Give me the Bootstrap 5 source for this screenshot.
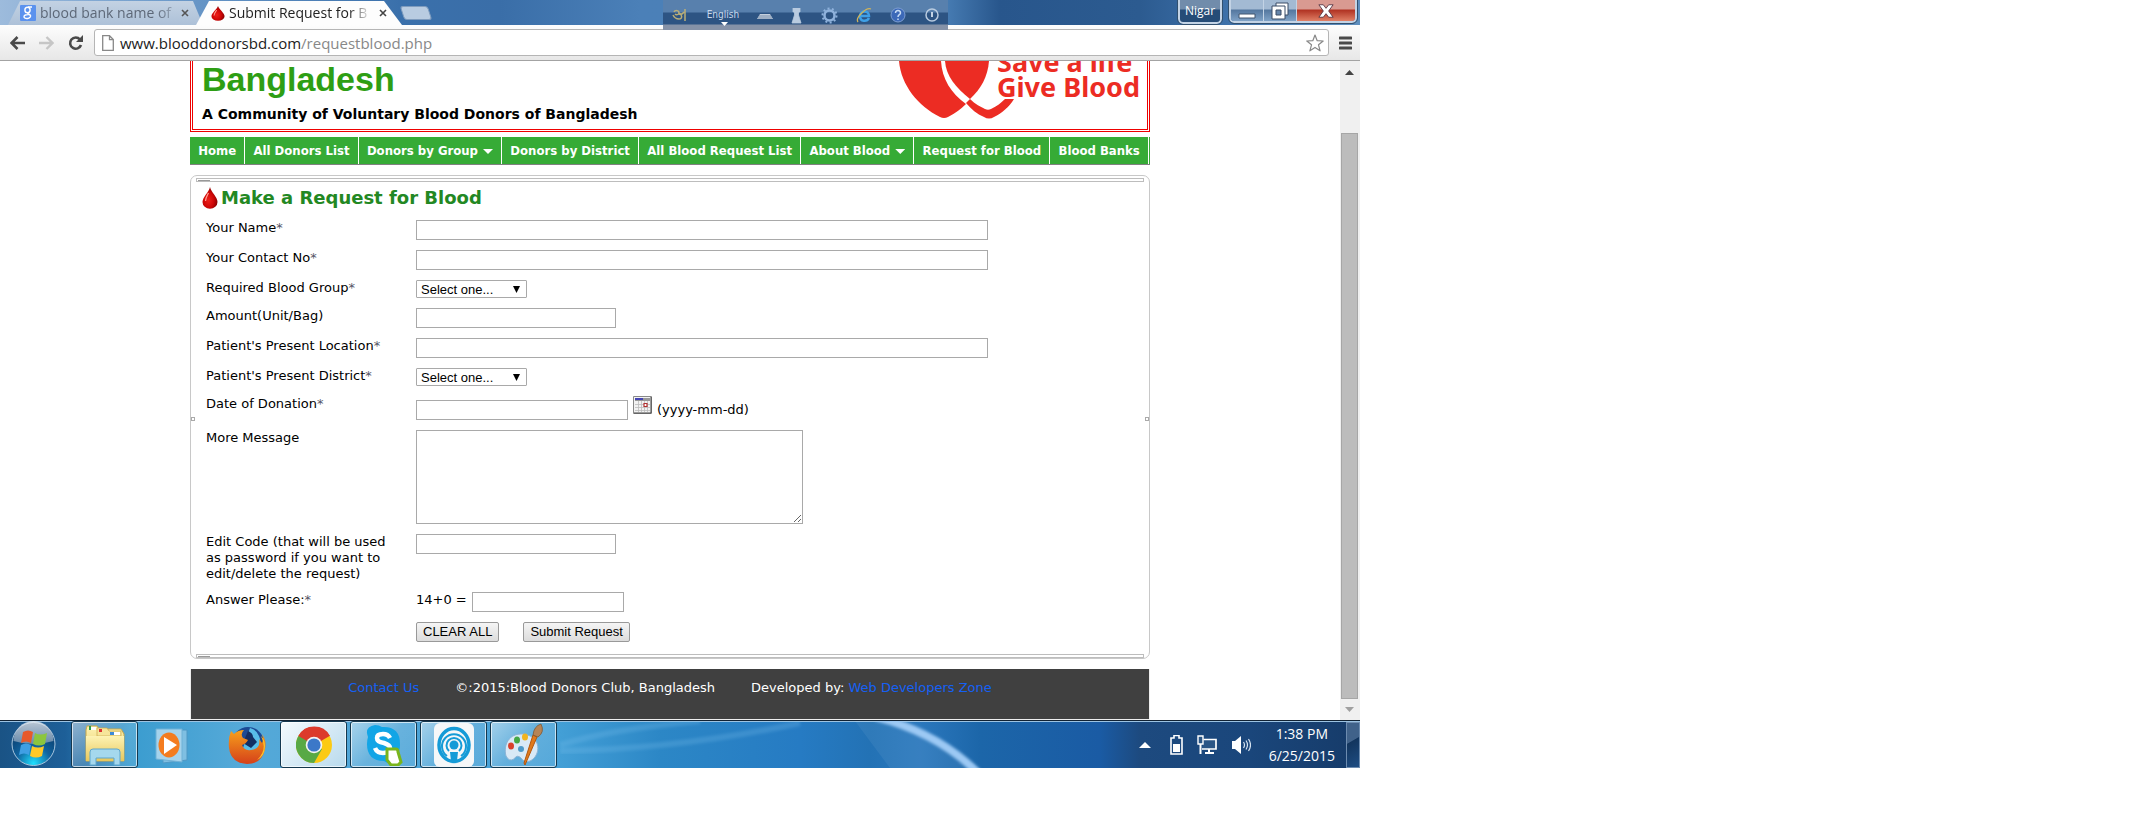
<!DOCTYPE html>
<html lang="en">
<head>
<meta charset="utf-8">
<meta name="viewport" content="width=device-width, initial-scale=1">
<title>Submit Request for Blood</title>
<link rel="stylesheet" href="https://cdn.jsdelivr.net/npm/bootstrap@5.3.0/dist/css/bootstrap.min.css">
<style>
  :root { --verdana: Verdana, "DejaVu Sans", sans-serif; --segoe: "Segoe UI", "Open Sans", "Noto Sans", sans-serif; --tahoma: "DejaVu Sans Condensed", "DejaVu Sans", sans-serif; --arial: "Liberation Sans", Arial, sans-serif; }
  body { background: #fff; color: #000; font-family: var(--verdana); font-size: 13px; line-height: 16px; overflow-x: hidden; }
  svg { display: block; flex: none; }
  .desktop { width: 63.85%; }

  /* Browser frame */
  .titlebar { height: 25px; padding-left: 8px; background: linear-gradient(90deg, #9dbbdc 0, #6f9ccb 160px, #3a70ab 400px, #3a6ea8 500px, #4b80b8 640px, #4a80b7 940px, #28568c 1000px, #2c5b90 1140px, #3c6fa8 1220px, #5f8fbe 100%); }
  .tab { height: 24px; font: 14px/22px var(--segoe); margin-top: 1px; }
  .tab-label { overflow: hidden; white-space: nowrap; }
  .tab-idle { width: 195px; padding: 0 14px 0 12px; color: #5d6878; background: linear-gradient(#c3d2e3, #adc1d8); clip-path: polygon(12px 0, 185px 0, 100% 100%, 0 100%); }
  .tab-live { width: 206px; padding: 0 15px 0 15px; color: #222; background: #fdfdfd; clip-path: polygon(13px 0, 188px 0, 100% 100%, 0 100%); margin-left: -7px; }
  .tab-idle .tab-label { width: 137px; -webkit-mask-image: linear-gradient(90deg, #000 115px, transparent 145px); }
  .tab-live .tab-label { width: 139px; -webkit-mask-image: linear-gradient(90deg, #000 120px, transparent 142px); }
  .plain-btn { border: 0; background: none; padding: 0; color: inherit; line-height: 1; }
  .new-tab { width: 28px; height: 14px; margin-top: 6px; border: 1px solid #7f9cbe; border-radius: 3px; background: #b9cce1; transform: skewX(18deg); padding: 0; }
  .ime-bar { left: 663px; top: 0; width: 285px; height: 30px; background: linear-gradient(#5880ad 0 12px, #2d5483 13px 24px, #8592a8 25px); color: #c7d8ec; z-index: 2; }
  .ime-lang { font: 10px/14px var(--tahoma); }
  .user-badge { width: 44px; height: 24px; border: 2px solid #c3d3e5; border-top: 0; border-radius: 0 0 5px 5px; outline: 1px solid #31506f; background: linear-gradient(#718cab 0 9px, #264c77 10px); color: #fff; font: 12px/20px var(--segoe); padding: 0; }
  .win-group { margin: 0 3px 0 7px; height: 23px; border: 2px solid #c3d3e5; border-top: 0; border-radius: 0 0 5px 5px; outline: 1px solid #31506f; overflow: hidden; }
  .win-btn { width: 33px; border: 0; border-right: 1px solid #c3d3e5; padding: 0; background: linear-gradient(#a3bad3 0 9px, #54779f 10px, #7fa2c6); display: flex; justify-content: center; align-items: center; }
  .win-close { width: 58px; border-right: 0; background: linear-gradient(#d99a91 0 9px, #b03222 10px, #e08066); }
  .toolbar { height: 36px; background: linear-gradient(#fdfdfd, #e7e7e7); border-bottom: 1px solid #a3a3a3; padding: 3px 8px 3px 10px; }
  .toolbar > .plain-btn + .plain-btn { margin-left: 14px; }
  .omnibox { height: 27px; border: 1px solid #b5b5b5; border-radius: 3px; background: #fff; margin: 0 10px 0 11px; padding: 0 4px 0 7px; gap: 6px; }
  .address { font: 15px/24px var(--segoe); color: #888; }
  .address b { font-weight: 400; color: #222; }

  /* Site */
  .viewport { background: #fff; }
  .site { width: 960px; }
  .banner { height: 71px; border: 3px double #e00; border-top: 0; overflow: hidden; padding-left: 9px; }
  .site-name { font: bold 34px/37px var(--arial); color: #2e9e14; margin: 0; }
  .tagline { font-size: 14px; line-height: 18px; font-weight: 700; margin-top: 7px; }
  .logo-block { width: 250px; height: 68px; }
  .slogan { left: 100px; bottom: 30px; font: bold 27px/25px "Noto Sans", sans-serif; color: #ec2c23; white-space: nowrap; }
  .menu { margin-top: 5px; height: 28px; background: #36ab36; border-bottom: 1px solid #808080; padding-right: 1px; }
  .menu a { display: flex; align-items: center; flex: 1 1 auto; justify-content: center; gap: 5px; color: #fff; font: bold 13px/27px var(--tahoma); text-decoration: none; border-right: 1px solid #fff; white-space: nowrap; }
  .caret { width: 10px; height: 5px; background: #fff; clip-path: polygon(0 0, 100% 0, 50% 100%); margin-top: 2px; }
  .panel { margin-top: 10px; border: 1px solid #c8c8c8; border-radius: 7px; padding: 2px 5px 0; }
  .rule-strip { height: 4px; border: 1px solid #bdbdbd; }
  .rule-strip::before { content: ""; display: block; width: 12px; height: 1px; margin-left: 1px; margin-top: 1px; background: #999; }
  .nub { width: 4px; height: 4px; border: 1px solid #aaa; background: #fff; top: 241px; }
  .title-row { padding: 5px 0 0 6px; gap: 3px; }
  .form-title { font-size: 18px; line-height: 22px; font-weight: 700; color: #238823; margin: 0; }
  .request-form { padding: 11px 10px 12px; display: grid; gap: 10px; }
  .form-line { display: flex; }
  .form-line > label, .form-line > .lead-cell { flex: 0 0 210px; padding-right: 20px; }
  .form-line > .sum { width: 56px; }
  .star { color: #556; }
  .field { height: 20px; padding: 0 2px; border: 1px solid #a9a9a9; border-radius: 0; font: 13px/16px var(--arial); background: #fff; }
  .w-long { width: 572px; } .w-mid { width: 200px; } .w-date { width: 212px; } .w-answer { width: 152px; }
  .date-cell { display: flex; align-items: flex-end; gap: 5px; }
  .date-hint { padding-bottom: 2px; }
  .picker { height: 18px; width: 111px; padding: 0 4px; border: 1px solid #a9a9a9; border-radius: 1px; font: 13px/15px var(--arial); color: #000; appearance: none; background: #fff url("data:image/svg+xml,%3Csvg xmlns='http://www.w3.org/2000/svg' viewBox='0 0 7 7'%3E%3Cpath d='M0 0h7L3.500 7z'/%3E%3C/svg%3E") no-repeat right 6px center / 7px 7px; }
  .message { width: 387px; height: 94px; }
  .push { height: 20px; padding: 0 6px; border: 1px solid #999; border-radius: 2px; background: linear-gradient(#f5f5f5, #dcdcdc); font: 13px/16px var(--arial); color: #000; }
  .site-foot { margin-top: 10px; height: 51px; background: #404040; color: #fff; padding-top: 11px; border: 1px solid #eee; border-top: 0; gap: 36px; }
  .site-foot a { color: #1560f5; text-decoration: none; }
  .scroller { width: 20px; background: #f0f0f0; padding: 9px 2px 8px 1px; }
  .thumb { background: #bcbcbc; border: 1px solid #a6a6a6; width: 100%; margin: 57px 0 7px; }

  /* Taskbar */
  .taskbar { height: 48px; border-top: 1px solid #123; box-shadow: inset 0 1px #9cc3e2; background: linear-gradient(90deg, #1a5385 0, #1d5f98 65px, #3a9ccf 130px, #55a9d8 240px, #439fd6 560px, #2c87c6 660px, #267bc3 800px, #2372b5 870px, #2b78bd 920px, #1c66a9 980px, #1a5ba4 1100px, #1d4a7f 1140px, #1a467b 1250px, #163b69 100%); overflow: hidden; }
  .streaks { left: 560px; }
  .start-btn { margin: 0 15px 0 11px; }
  .task { width: 67px; height: 47px; border: 1px solid #14384f; border-radius: 3px; box-shadow: inset 0 0 0 1px #ffffffa8; background: linear-gradient(135deg, #ffffff80, #ffffff28 50%, #ffffff18); display: flex; align-items: center; justify-content: center; padding: 0; }
  .task-live { background: linear-gradient(135deg, #f4fafd, #b8daed); }
  .task-bare { border: 0; box-shadow: none; background: none; }
  .task-bare + .task-bare { margin-left: 8px; }
  .task-live ~ .task { margin-left: 3px; }
  .tray { gap: 14px; margin-left: 19px; }
  .clock { font: 14px/22px var(--segoe); color: #fff; text-align: center; margin: 0 11px 0 18px; }
  .show-desk { width: 14px; height: 46px; border: 1px solid #6d8cb0; background: linear-gradient(150deg, #40628a 0 40%, #12355e 42%, #1f4d83); padding: 0; }
</style>
</head>
<body>
<svg width="0" height="0" class="position-absolute" aria-hidden="true">
  <defs>
    <radialGradient id="red" cx=".4" cy=".6" r=".6"><stop offset="0" stop-color="#f0201a"/><stop offset=".6" stop-color="#cc0606"/><stop offset="1" stop-color="#800"/></radialGradient>
    <linearGradient id="folder" x2="0" y2="1"><stop stop-color="#fdf3b4"/><stop offset="1" stop-color="#e8c75c"/></linearGradient>
    <radialGradient id="orb" cx=".5" cy=".95" r=".9"><stop offset="0" stop-color="#1fe0ff"/><stop offset=".45" stop-color="#10639f"/><stop offset="1" stop-color="#0a3460"/></radialGradient>
    <linearGradient id="gloss" x2="0" y2="1"><stop stop-color="#e8eef4"/><stop offset="1" stop-color="#7c97b3"/></linearGradient>
    <linearGradient id="fox" x2="0" y2="1"><stop stop-color="#f7a11b"/><stop offset="1" stop-color="#d5401a"/></linearGradient>
    <symbol id="drop" viewBox="0 0 16 22"><path d="M8 0C7 5 .5 10 .5 15a7.500 6.800 0 0 0 15 0C15.500 10 9 5 8 0z" fill="url(#red)"/><path d="M6.500 6C5 9 3.500 11 3.500 14" stroke="#ff9d90" stroke-width="1.300" fill="none"/></symbol>
  </defs>
</svg>

<div class="desktop d-flex flex-column">
  <header class="titlebar position-relative d-flex align-items-start">
    <div class="tab tab-idle d-flex align-items-center">
      <svg width="16" height="16" viewBox="0 0 16 16"><rect width="16" height="16" rx="1" fill="#5b92ee"/><g fill="none" stroke="#fff" stroke-width="1.400"><ellipse cx="7.500" cy="5" rx="2.600" ry="2.800"/><path d="M8 2h4M8.500 7.500c-2 1 1 1.500 2 3 .8 3.500-6.500 4-6.500 1.200C4 10 6 9.500 8.500 9.700"/></g></svg>
      <span class="tab-label ms-1">blood bank name of</span>
      <button class="plain-btn ms-auto" aria-label="Close tab"><svg width="8" height="8" viewBox="0 0 8 8"><path d="M1 1l6 6M7 1L1 7" stroke="#555" stroke-width="1.600"/></svg></button>
    </div>
    <div class="tab tab-live d-flex align-items-center">
      <svg width="14" height="15" viewBox="0 0 16 22" preserveAspectRatio="none"><use href="#drop" width="16" height="22"/></svg>
      <span class="tab-label ms-1">Submit Request for Blood</span>
      <button class="plain-btn ms-auto" aria-label="Close tab"><svg width="8" height="8" viewBox="0 0 8 8"><path d="M1 1l6 6M7 1L1 7" stroke="#444" stroke-width="1.600"/></svg></button>
    </div>
    <button class="new-tab" aria-label="New tab"></button>
    <div class="ime-bar position-absolute d-flex align-items-center justify-content-between ps-2 pe-2">
      <svg width="18" height="18" viewBox="0 0 18 18" role="img" aria-label="Bangla"><path d="M3 6c1-2 5-2 5 1 0 2-3 2-4 1M8 7c3 1 4 6 0 6-3 0-5-2-6-4M8 8q3 1 5-2M14 3v12" fill="none" stroke="#b9ae78" stroke-width="1.500"/></svg>
      <span class="ime-lang">English</span>
      <svg width="16" height="16" viewBox="0 0 16 16"><path d="M3 7h10l3 5H0z" fill="#c4d0de"/><path d="M2 9h12M1 11h14" stroke="#5b7699" stroke-width=".7"/></svg>
      <svg width="13" height="17" viewBox="0 0 13 17"><path d="M3 1v4h7V1M4.500 5v3L2 16h9L8.500 8V5z" fill="#b9cbe0" stroke="#b9cbe0" stroke-width=".8"/></svg>
      <svg width="17" height="17" viewBox="0 0 17 17"><circle cx="8.500" cy="8.500" r="5" fill="none" stroke="#8fb2dc" stroke-width="2.500"/><circle cx="8.500" cy="8.500" r="7" fill="none" stroke="#8fb2dc" stroke-width="2" stroke-dasharray="2 2.400"/></svg>
      <svg width="17" height="17" viewBox="0 0 17 17"><path d="M4 9h9c0-6-9-6-9 0 0 6 7 6 9 2" fill="none" stroke="#3fa0e6" stroke-width="2.500"/><path d="M2 15C-1 11 10 0 15 2" fill="none" stroke="#d0b45a" stroke-width="1.300"/></svg>
      <svg width="16" height="16" viewBox="0 0 16 16"><circle cx="8" cy="8" r="7" fill="#3c69b8" stroke="#7d9ed2"/><path d="M5.500 6c0-3.500 5-3 5 0 0 2-2.500 1.500-2.500 4M8 11.500V13" fill="none" stroke="#c7dbf4" stroke-width="1.500"/></svg>
      <svg width="16" height="16" viewBox="0 0 16 16"><circle cx="8" cy="8" r="6" fill="none" stroke="#b9cbe0" stroke-width="1.500"/><path d="M8 5v5" stroke="#d5e2f0" stroke-width="1.800"/></svg>
      <svg class="position-absolute bottom-0 mb-1" width="7" height="4" viewBox="0 0 7 4" style="left:58px"><path d="M0 0h7L3.500 4z" fill="#fff"/></svg>
    </div>
    <button class="user-badge ms-auto">Nigar</button>
    <div class="win-group d-flex">
      <button class="win-btn" aria-label="Minimize"><svg width="18" height="18" viewBox="0 0 18 18"><path d="M1 12h16v4H1z" fill="#fff" stroke="#40546e"/></svg></button>
      <button class="win-btn" aria-label="Restore"><svg width="18" height="18" viewBox="0 0 18 18"><g fill="#fff" stroke="#3b4d66"><path d="M5 1h12v12H5z"/><path d="M1 4h13v13H1z"/><path d="M5 8h5v5H5z" fill="#6686ab"/></g></svg></button>
      <button class="win-btn win-close" aria-label="Close"><svg width="16" height="16" viewBox="0 0 18 16"><path d="M1 1h5l3 4 3-4h5l-5 7 5 7h-5l-3-4-3 4H1l5-7z" fill="#fff" stroke="#553340"/></svg></button>
    </div>
  </header>

  <nav class="toolbar d-flex align-items-center" aria-label="Browser">
    <button class="plain-btn" aria-label="Back"><svg width="15" height="14" viewBox="0 0 15 14"><path d="M15 7H2M7.500 1L1.500 7l6 6" fill="none" stroke="#4a4a4a" stroke-width="2.600"/></svg></button>
    <button class="plain-btn" aria-label="Forward"><svg width="15" height="14" viewBox="0 0 15 14"><path d="M0 7h13M7.500 1l6 6-6 6" fill="none" stroke="#c6c6c6" stroke-width="2.400"/></svg></button>
    <button class="plain-btn" aria-label="Reload"><svg width="15" height="16" viewBox="0 0 15 16"><path d="M12 4.500A5.600 5.600 0 1 0 13 10" fill="none" stroke="#4a4a4a" stroke-width="2.600"/><path d="M15 0v7H8z" fill="#4a4a4a"/></svg></button>
    <div class="omnibox flex-grow-1 d-flex align-items-center">
      <svg width="12" height="16" viewBox="0 0 12 16"><path d="M.7.700h6.800l3.800 3.800v10.800H.7zM7.500.700v4h3.800" fill="#fff" stroke="#888" stroke-width="1.300"/></svg>
      <span class="address"><b>www.blooddonorsbd.com</b>/requestblood.php</span>
      <button class="plain-btn ms-auto" aria-label="Bookmark"><svg width="18" height="18" viewBox="0 0 18 18"><path d="M9 1l2.200 5.700 6 .3-4.700 3.800 1.600 6L9 13.400l-5.100 3.400 1.600-6L.8 7l6-.3z" fill="#fff" stroke="#888" stroke-width="1.200" stroke-linejoin="round"/></svg></button>
    </div>
    <button class="plain-btn" aria-label="Menu"><svg width="13" height="14" viewBox="0 0 13 14"><path d="M1 2h11M1 7h11M1 12h11" stroke="#4a4a4a" stroke-width="3" stroke-linecap="round"/></svg></button>
  </nav>

  <div class="viewport d-flex">
    <div class="flex-grow-1 d-flex justify-content-center">
      <div class="site">
        <header class="banner d-flex justify-content-between">
          <div>
            <h1 class="site-name">Bangladesh</h1>
            <div class="tagline">A Community of Voluntary Blood Donors of Bangladesh</div>
          </div>
          <div class="logo-block position-relative">
            <svg width="250" height="68" viewBox="0 0 250 68" fill="#ec2c23"><path d="M2 0C4 24 21 45 43 56q4 2 8 0 10-5 18-13C54 32 45 18 44 0z"/><path d="M48 0c1 15 11 27 25 38C84 28 91 15 92 0z"/><path d="M69 42l4-4c5 5 11 8 15 10 2 1 4 1 6 0 6-3 10-6 14-10h9c-5 8-12 14-20 18q-5 3-10 0c-7-3-13-8-18-14z"/></svg>
            <div class="slogan position-absolute">Save a life<br>Give Blood</div>
          </div>
        </header>

        <nav class="menu d-flex" aria-label="Site">
          <a href="#">Home</a><a href="#">All Donors List</a><a href="#">Donors by Group <span class="caret"></span></a><a href="#">Donors by District</a><a href="#">All Blood Request List</a><a href="#">About Blood <span class="caret"></span></a><a href="#">Request for Blood</a><a href="#">Blood Banks</a>
        </nav>

        <main class="panel position-relative">
          <span class="nub position-absolute start-0"></span><span class="nub position-absolute end-0"></span>
          <div class="rule-strip"></div>
          <div class="title-row d-flex align-items-center">
            <svg width="16" height="22"><use href="#drop" width="16" height="22"/></svg>
            <h2 class="form-title">Make a Request for Blood</h2>
          </div>
          <form class="request-form">
            <div class="form-line"><label for="nm">Your Name<span class="star">*</span></label><input id="nm" class="field w-long"></div>
            <div class="form-line"><label for="ct">Your Contact No<span class="star">*</span></label><input id="ct" class="field w-long"></div>
            <div class="form-line"><label for="bg">Required Blood Group<span class="star">*</span></label><select id="bg" class="picker"><option>Select one...</option></select></div>
            <div class="form-line"><label for="am">Amount(Unit/Bag)</label><input id="am" class="field w-mid"></div>
            <div class="form-line"><label for="lo">Patient's Present Location<span class="star">*</span></label><input id="lo" class="field w-long"></div>
            <div class="form-line"><label for="di">Patient's Present District<span class="star">*</span></label><select id="di" class="picker"><option>Select one...</option></select></div>
            <div class="form-line"><label for="da">Date of Donation<span class="star">*</span></label>
              <div class="date-cell"><input id="da" class="field w-date mt-1">
                <button type="button" class="plain-btn align-self-start" aria-label="Pick a date"><svg width="19" height="18" viewBox="0 0 19 18"><path d="M.5.500h18v17H.5z" fill="#f2f2f2" stroke="#888"/><path d="M2 2h15v3H2z" fill="#999"/><path d="M2 2h8v2H2z" fill="#4444b4"/><path d="M2 8.500h15M2 11.500h15M2 14.500h15M5.500 5v11M8.500 5v11M11.500 5v11M14.500 5v11" stroke="#bbb" stroke-width=".8"/><path d="M11 7.500h3v3h-3z" fill="#fff" stroke="#b03030" stroke-width="1.200"/><path d="M18 1v16H1" fill="none" stroke="#444"/></svg></button>
                <span class="date-hint">(yyyy-mm-dd)</span></div></div>
            <div class="form-line"><label for="ms">More Message</label><textarea id="ms" class="field message"></textarea></div>
            <div class="form-line"><label for="ec">Edit Code (that will be used as password if you want to edit/delete the request)</label><input id="ec" class="field w-mid"></div>
            <div class="form-line"><label for="an">Answer Please:<span class="star">*</span></label><span class="sum">14+0 =</span><input id="an" class="field w-answer"></div>
            <div class="form-line"><span class="lead-cell"></span><button type="reset" class="push">CLEAR ALL</button><button type="submit" class="push ms-4">Submit Request</button></div>
          </form>
          <div class="rule-strip"></div>
        </main>

        <footer class="site-foot d-flex justify-content-center">
          <a href="#">Contact Us</a><span>©:2015:Blood Donors Club, Bangladesh</span><span>Developed by: <a href="#">Web Developers Zone</a></span>
        </footer>
      </div>
    </div>
    <div class="scroller d-flex flex-column align-items-center">
      <svg width="9" height="6" viewBox="0 0 9 6"><path d="M0 5L4.500 0 9 5z" fill="#444"/></svg>
      <div class="thumb flex-grow-1"></div>
      <svg width="9" height="6" viewBox="0 0 9 6"><path d="M0 1h9L4.500 6z" fill="#a0a0a0"/></svg>
    </div>
  </div>

  <div class="taskbar position-relative d-flex align-items-center">
    <svg class="streaks position-absolute top-0" width="480" height="47" viewBox="0 0 480 47"><defs><filter id="soft"><feGaussianBlur stdDeviation="1.500"/></filter></defs><path d="M295 0h50L420 47H330z" fill="#fff" opacity=".06"/><path d="M0 24Q50 8 140 0M0 30Q120 28 240 2" fill="none" stroke="#7cc0ec" stroke-width="6" opacity=".25" filter="url(#soft)"/><path d="M316-4q62 16 102 56" fill="none" stroke="#9cc9f4" stroke-width="8" filter="url(#soft)"/></svg>
    <button class="plain-btn start-btn position-relative" aria-label="Start"><svg width="45" height="47" viewBox="0 0 45 47"><circle cx="22.500" cy="23" r="21.500" fill="url(#orb)" stroke="#a9c6de"/><path d="M2.500 20a20 20 0 0 1 40 0q-20 6-40 0z" fill="url(#gloss)" opacity=".8"/><path d="M12 11q5-3 10 0l-2 11q-5-3-10 0z" fill="#e8592a"/><path d="M24 12q5 3 12 0l-2 11q-6 3-12 0z" fill="#8cc63e"/><path d="M10 24q5-3 10 0l-2 10q-5-3-10 0z" fill="#3f9fe4"/><path d="M21 25q6 3 12 0l-2 10q-6 3-12 0z" fill="#ffc928"/></svg></button>
    <button class="task" aria-label="Explorer"><svg width="42" height="42" viewBox="0 0 42 42"><path d="M3 2h10l2 3h22l3 5v27H2V6z" fill="url(#folder)" stroke="#c9a84a"/><path d="M13 4h10l2 3h12v5H13z" fill="#f6e59a" stroke="#c9a84a" stroke-width=".7"/><path d="M6 3h6v3H6zM26 8h10v3H26z" fill="#fff"/><path d="M5 2h2v4H5z" fill="#2b9c4a"/><path d="M15 5h3v3h-3z" fill="#d33"/><path d="M26 8h4v3h-4z" fill="#3d8ad8"/><path d="M2 12h38v25H2z" fill="url(#folder)"/><path d="M6 41V28q0-3 3-3h24q3 0 3 3v13h-6v-7H12v7z" fill="#a5d8ee" stroke="#5fa6cc"/></svg></button>
    <button class="task task-bare" aria-label="Media Player"><svg width="34" height="38" viewBox="0 0 34 38"><path d="M8 4h24v30L8 37z" fill="#7fbfe2" stroke="#4f98c4"/><path d="M1 3h26v33L1 33z" fill="#a5d3ec" stroke="#6fb1d6"/><ellipse cx="14" cy="19" rx="10.500" ry="12.500" fill="#f47c1f"/><path d="M9 11l13 8-13 9z" fill="#fff"/></svg></button>
    <button class="task task-bare" aria-label="Firefox"><svg width="38" height="40" viewBox="0 0 38 40"><circle cx="20" cy="18" r="16" fill="#1c4a94"/><path d="M22 3q7 2 9 8 4 9-4 16-9 3-12-4z" fill="#58bce8"/><path d="M20 6q5 2 5 6l4 5-6 6-8-5z" fill="#132e63"/><path d="M3 6l3 3q4-4 10-4-4 4-1 8 3 1 5 2-2 4-6 5 2 6 9 5 10-1 8-11l3 4q2-4 0-9 5 7 3 15-3 15-18 15Q3 38 1 23 0 13 3 6z" fill="url(#fox)"/><path d="M33 11q7 14-4 24 8-4 8-14 0-6-4-10z" fill="#fbc42c"/></svg></button>
    <button class="task task-live" aria-label="Chrome"><svg width="36" height="38" viewBox="0 0 36 36"><circle cx="18" cy="18" r="18" fill="#fcca13"/><path d="M18 18L2.400 9A18 18 0 0 1 33.600 9z" fill="#dc3a2b"/><path d="M18 18V9h16a18 18 0 0 0-31.600 0L10 22z" fill="#dc3a2b"/><path d="M18 18L2.400 9A18 18 0 0 0 18 36l8-14z" fill="#58a945"/><circle cx="18" cy="18" r="8.300" fill="#f3f3f3"/><circle cx="18" cy="18" r="6.600" fill="#3c78c8"/></svg></button>
    <button class="task" aria-label="Skype"><svg width="38" height="42" viewBox="0 0 38 42"><path d="M10 1q4 0 7 2 18-1 18 17 0 5-1 7 2 11-9 12-4 0-6-2Q2 37 2 20q0-4 1-7Q-1 3 10 1z" fill="#12a5e6"/><path d="M25 14q-2-4-7-4-6 0-6 4 0 4 7 5 6 2 6 5 0 5-7 5-6 0-8-5" fill="none" stroke="#fff" stroke-width="4.500"/><path d="M22 25h9q2 0 2 3l3 10-3 3h-7l-4-5z" fill="#fff" stroke="#79b51c" stroke-width="3"/></svg></button>
    <button class="task" aria-label="Connectify"><svg width="40" height="44" viewBox="0 0 40 44"><rect width="40" height="44" rx="6" fill="#f5f7f8"/><g fill="none" stroke="#159bd7"><ellipse cx="20" cy="22" rx="15" ry="16.500" stroke-width="3.500"/><path d="M13 33a12 12 0 1 1 14 0" stroke-width="2"/><path d="M15 28a7.500 7.500 0 1 1 10 0" stroke-width="2"/></g><circle cx="20" cy="22" r="4.500" fill="#159bd7"/><path d="M16 29h8l-1 9h-6z" fill="#159bd7"/></svg></button>
    <button class="task" aria-label="Paint"><svg width="40" height="44" viewBox="0 0 40 44"><path d="M19 11C5 10-1 22 2 33q3 6 8 3 3-5 7-1 3 5 9 3c11-5 12-25-7-27z" fill="#d9e9f6" stroke="#8cb4d6"/><ellipse cx="7" cy="23" rx="3" ry="3.500" fill="#d8402c"/><ellipse cx="13" cy="17" rx="3" ry="3.500" fill="#45a846"/><ellipse cx="21" cy="14" rx="3" ry="3.500" fill="#f2b420"/><circle cx="17" cy="26" r="3" fill="#4f9ac8"/><path d="M33 14l-12 28-1-2 9-28z" fill="#e07a1c" stroke="#b3560d"/><path d="M29 12Q30 3 37 1q4 8-3 13z" fill="#b78455" stroke="#7b5028" stroke-width=".7"/></svg></button>
    <svg class="ms-auto" width="12" height="7" viewBox="0 0 12 7"><path d="M0 7l6-6 6 6z" fill="#fff"/></svg>
    <div class="tray d-flex align-items-center">
      <svg width="13" height="20" viewBox="0 0 13 20"><path d="M4 .500h5V3h3v16H1V3h3z" fill="none" stroke="#fff" stroke-width="1.600"/><path d="M3 9h7v8H3z" fill="#fff"/></svg>
      <svg width="20" height="20" viewBox="0 0 20 20"><path d="M6.500 4.500H19v9.500H5" fill="#2b5686" stroke="#fff" stroke-width="1.700"/><path d="M1 1h5v8H1z" fill="#2b5686" stroke="#fff" stroke-width="1.400"/><path d="M3.500 9v10M12 14v4M8 18h9" stroke="#fff" stroke-width="2"/></svg>
      <svg class="ms-n1" width="20" height="20" viewBox="0 0 20 20"><path d="M1 6h3l6-5v18l-6-5H1z" fill="#fff"/><path d="M12.500 7q2 3 0 6M15 5.500q3 4.500 0 9M17.500 4q4 6 0 12" fill="none" stroke="#d5e2f0" stroke-width="1.200"/></svg>
    </div>
    <div class="clock">1:38 PM<br>6/25/2015</div>
    <button class="show-desk" aria-label="Show desktop"></button>
  </div>
</div>
<script src="https://cdn.jsdelivr.net/npm/bootstrap@5.3.0/dist/js/bootstrap.bundle.min.js"></script>
</body>
</html>
